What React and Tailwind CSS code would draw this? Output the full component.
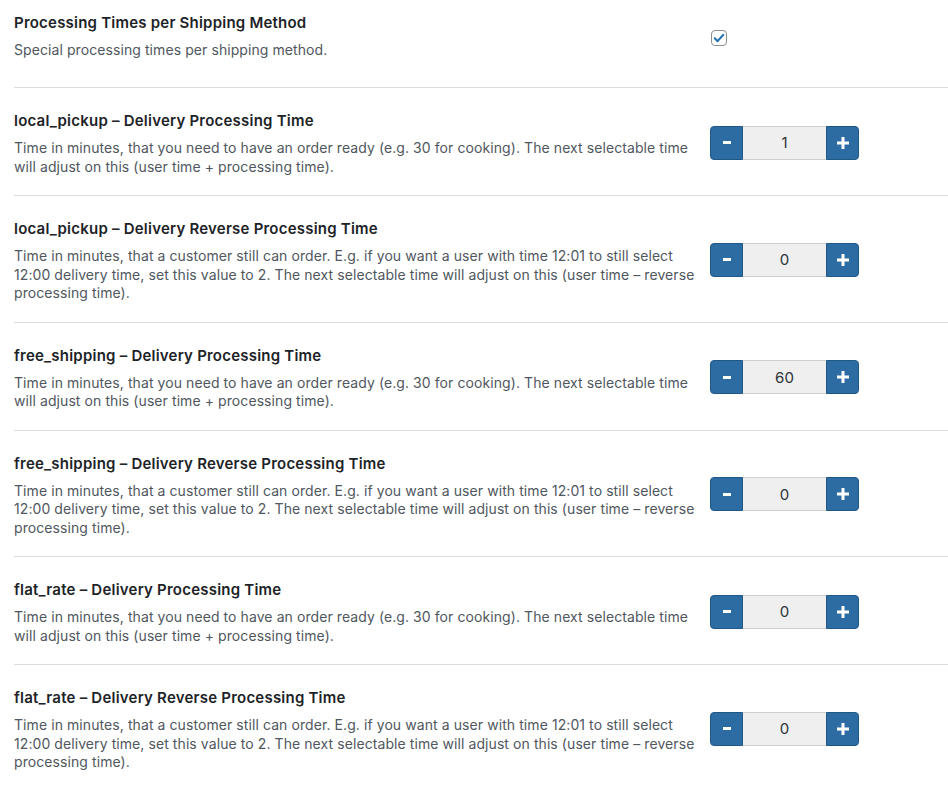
import React, { useState } from 'react';

const rows = [
  { method: 'local_pickup', reverse: false, value: 1 },
  { method: 'local_pickup', reverse: true, value: 0 },
  { method: 'free_shipping', reverse: false, value: 60 },
  { method: 'free_shipping', reverse: true, value: 0 },
  { method: 'flat_rate', reverse: false, value: 0 },
  { method: 'flat_rate', reverse: true, value: 0 },
];

const normalDesc =
  'Time in minutes, that you need to have an order ready (e.g. 30 for cooking). The next selectable time will adjust on this (user time + processing time).';
const reverseDesc =
  'Time in minutes, that a customer still can order. E.g. if you want a user with time 12:01 to still select 12:00 delivery time, set this value to 2. The next selectable time will adjust on this (user time \u2013 reverse processing time).';

function Stepper({ initial }) {
  const [val, setVal] = useState(initial);
  return (
    <div className="flex h-[34px] w-[149px]">
      <button
        onClick={() => setVal((v) => Math.max(0, v - 1))}
        className="w-[33px] h-full flex items-center justify-center bg-[#2c6ca3] border border-[#1f5887] rounded-l-[4px] text-white"
      >
        <span className="block w-[8px] h-[3px] bg-white"></span>
      </button>
      <input
        value={val}
        onChange={(e) => setVal(e.target.value)}
        className="w-[83px] h-full bg-[#efefef] border-y border-[#cfcfcf] text-center text-[15px] text-[#2c3338] outline-none"
      />
      <button
        onClick={() => setVal((v) => Number(v) + 1)}
        className="w-[33px] h-full flex items-center justify-center bg-[#2c6ca3] border border-[#1f5887] rounded-r-[4px] text-white"
      >
        <svg width="12" height="12" viewBox="0 0 12 12">
          <rect x="4.5" y="0" width="3" height="12" fill="white" />
          <rect x="0" y="4.5" width="12" height="3" fill="white" />
        </svg>
      </button>
    </div>
  );
}

function App() {
  const [checked, setChecked] = useState(true);

  return (
    <div className="bg-white min-h-[800px] pl-[14px] font-['Inter',sans-serif]">
      <div className="flex items-start border-b border-[#dcdcde] h-[88px] pt-[11px]">
        <div className="w-[696px] pr-[6px]">
          <div className="text-[15px] leading-[24px] font-semibold text-[#1d2327] tracking-[0.22px]">Processing Times per Shipping Method</div>
          <div className="text-[14px] leading-[18.5px] text-[#50575e] mt-[6px] tracking-[0.08px]">Special processing times per shipping method.</div>
        </div>
        <div className="pt-[19px] pl-[1px]">
          <button
            onClick={() => setChecked(!checked)}
            className="w-[16px] h-[16px] border border-[#8c8f94] rounded-[4px] flex items-center justify-center bg-white"
          >
            {checked && (
              <svg width="14" height="14" viewBox="0 0 20 20">
                <path d="M4 10.5 L8 14.5 L16 5.5" stroke="#2271b1" strokeWidth="3" fill="none" strokeLinecap="round" strokeLinejoin="round" />
              </svg>
            )}
          </button>
        </div>
      </div>

      {rows.map((r, i) => (
        <div key={i} className={'flex items-center pt-[21px] pb-[19px] ' + (i < rows.length - 1 ? 'border-b border-[#dcdcde]' : '')}>
          <div className="w-[696px] pr-[8px]">
            <div className="text-[15px] leading-[24px] font-semibold text-[#1d2327] tracking-[0.22px]">
              {r.method} {'\u2013'} Delivery {r.reverse ? 'Reverse ' : ''}Processing Time
            </div>
            <div className="text-[14px] leading-[18.5px] text-[#50575e] mt-[6px] tracking-[0.08px]">{r.reverse ? reverseDesc : normalDesc}</div>
          </div>
          <Stepper initial={r.value} />
        </div>
      ))}
    </div>
  );
}

export default App;
